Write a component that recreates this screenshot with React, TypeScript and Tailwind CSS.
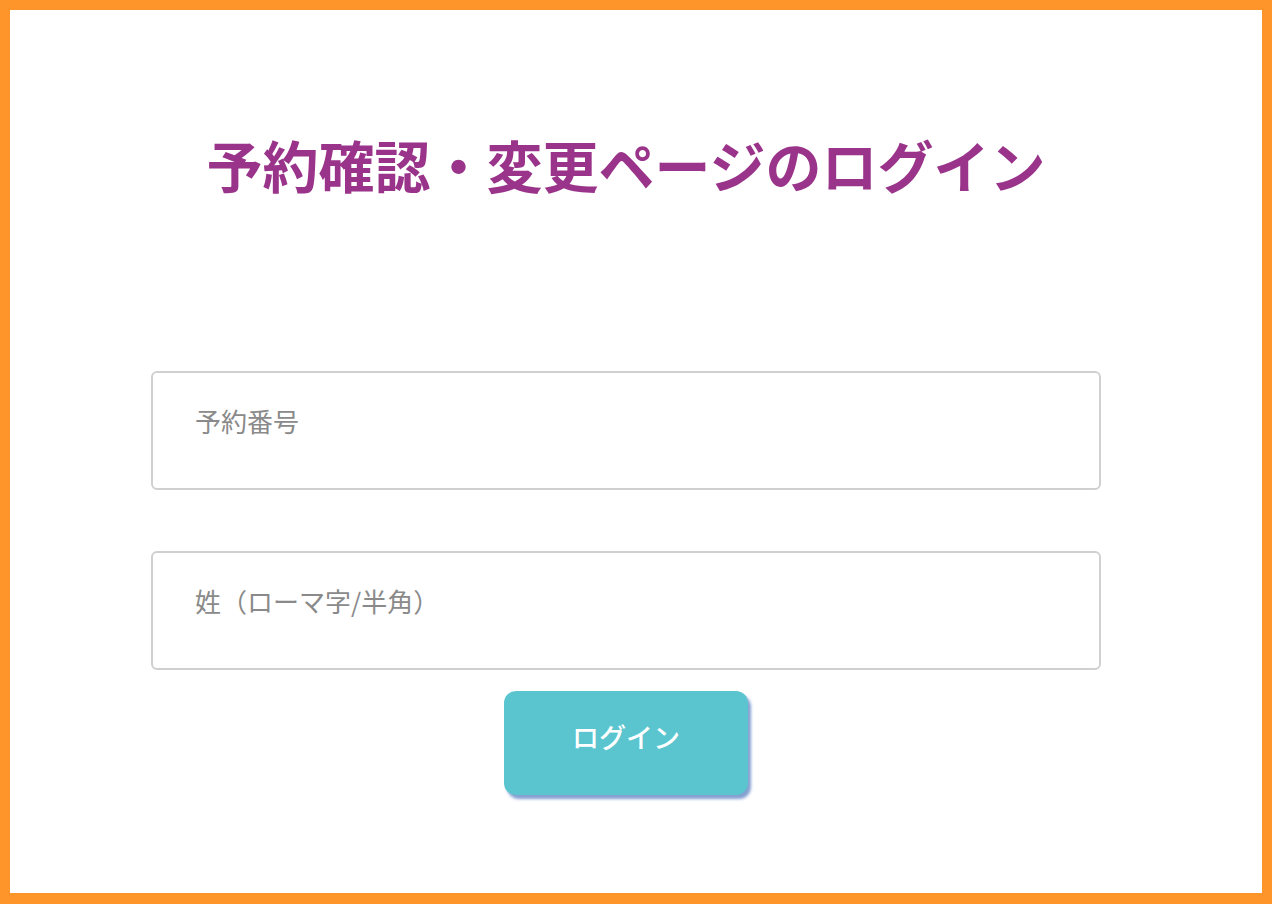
import React from "react";

const font = { fontFamily: '"Noto Sans CJK JP", "Noto Sans", sans-serif' };

export default function App() {
  return (
    <div
      className="h-[904px] w-[1272px] border-[10px] border-b-[11px] border-[#fd952b] bg-white"
      style={font}
    >
      <div className="pr-[20px]">
        <h1 className="pt-[106px] text-center text-[56px] leading-[96px] font-bold text-[#9a348a]">
          予約確認・変更ページのログイン
        </h1>
        <form className="mx-auto mt-[159px] flex w-[950px] flex-col">
          <input
            type="text"
            placeholder="予約番号"
            className="h-[119px] rounded-[6px] border-2 border-[#d0d0d0] px-[42px] pb-[20px] text-[26px] text-gray-700 outline-none placeholder:text-[#8a8a8a]"
          />
          <input
            type="text"
            placeholder="姓（ローマ字/半角）"
            className="mt-[61px] h-[119px] rounded-[6px] border-2 border-[#d0d0d0] px-[42px] pb-[20px] text-[26px] text-gray-700 outline-none placeholder:text-[#8a8a8a]"
          />
          <button
            type="button"
            className="mx-auto mt-[21px] h-[104px] w-[244px] rounded-[12px] bg-[#5bc5cf] pb-[12px] text-[27px] font-medium text-white shadow-[3px_4px_3px_rgba(80,120,190,0.7)]"
          >
            ログイン
          </button>
        </form>
      </div>
    </div>
  );
}
